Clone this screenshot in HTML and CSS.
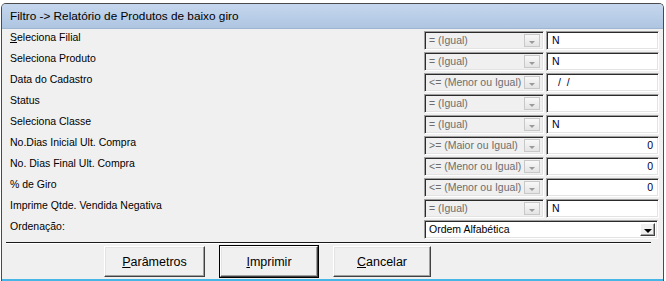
FILE: index.html
```html
<!doctype html>
<html>
  <head>
    <meta charset="utf-8">
    <title>Filtro -&gt; Relatório de Produtos de baixo giro</title>
    <link rel="stylesheet" href="styles.css">
  </head>
  <body>
    <div class="window">
      <div class="titlebar">Filtro -&gt; Relatório de Produtos de baixo giro</div>
      <div class="content">
        <div class="form">
          <div class="row">
            <span class="label"><u>S</u>eleciona Filial</span>
            <div class="combo disabled"><span>= (Igual)</span><i class="arrow"></i></div>
            <div class="field">N</div>
          </div>
          <div class="row">
            <span class="label">Seleciona Produto</span>
            <div class="combo disabled"><span>= (Igual)</span><i class="arrow"></i></div>
            <div class="field">N</div>
          </div>
          <div class="row">
            <span class="label">Data do Cadastro</span>
            <div class="combo disabled"><span>&lt;= (Menor ou Igual)</span><i class="arrow"></i></div>
            <div class="field date">/ /</div>
          </div>
          <div class="row">
            <span class="label">Status</span>
            <div class="combo disabled"><span>= (Igual)</span><i class="arrow"></i></div>
            <div class="field"></div>
          </div>
          <div class="row">
            <span class="label">Seleciona Classe</span>
            <div class="combo disabled"><span>= (Igual)</span><i class="arrow"></i></div>
            <div class="field">N</div>
          </div>
          <div class="row">
            <span class="label">No.Dias Inicial Ult. Compra</span>
            <div class="combo disabled"><span>&gt;= (Maior ou Igual)</span><i class="arrow"></i></div>
            <div class="field num">0</div>
          </div>
          <div class="row">
            <span class="label">No. Dias Final Ult. Compra</span>
            <div class="combo disabled"><span>&lt;= (Menor ou Igual)</span><i class="arrow"></i></div>
            <div class="field num">0</div>
          </div>
          <div class="row">
            <span class="label">% de Giro</span>
            <div class="combo disabled"><span>&lt;= (Menor ou Igual)</span><i class="arrow"></i></div>
            <div class="field num">0</div>
          </div>
          <div class="row">
            <span class="label">Imprime Qtde. Vendida Negativa</span>
            <div class="combo disabled"><span>= (Igual)</span><i class="arrow"></i></div>
            <div class="field">N</div>
          </div>
          <div class="row">
            <span class="label">Ordenação:</span>
            <div class="combo wide"><span>Ordem Alfabética</span><i class="arrow"></i></div>
          </div>
        </div>

        <div class="separator"></div>

        <div class="buttons">
          <button class="btn btn-params"><u>P</u>arâmetros</button>
          <button class="btn btn-default"><u>I</u>mprimir</button>
          <button class="btn"><u>C</u>ancelar</button>
        </div>
      </div>
    </div>
  </body>
</html>
```

FILE: styles.css
```css
body {
  margin: 0;
  background: #fff;
  font-family: "Liberation Sans", Arial, sans-serif;
  font-size: 10.5px;
  color: #000;
}

.window {
  margin: 3px 2px 0 1px;
  height: 278px;
  border: 1px solid #4a4a4a;
  border-bottom: 0;
  border-radius: 5px 5px 0 0;
  background: #f0f0f0;
  box-sizing: border-box;
  display: flex;
  flex-direction: column;
  overflow: hidden;
}

.titlebar {
  height: 24px;
  padding-left: 8px;
  line-height: 24px;
  font-size: 11.8px;
  background: linear-gradient(#c5d7ee, #aec5e1);
  border-bottom: 1px solid #9fb6d2;
}

.content {
  flex: 1;
  padding: 2px 4px 0 8px;
  border-bottom: 2px solid #47b5e5;
}

.row {
  display: grid;
  grid-template-columns: 1fr 120px 113px;
  column-gap: 2px;
  height: 19px;
  margin-bottom: 2px;
}

.label {
  line-height: 13px;
}

.combo,
.field {
  border: 1px solid;
  border-color: #a0a0a0 #fff #fff #a0a0a0;
  box-shadow: inset 1px 1px 0 #2b2b2b, inset -1px -1px 0 #e3e3e3;
  box-sizing: border-box;
  line-height: 17px;
  white-space: nowrap;
  overflow: hidden;
}

.combo {
  display: flex;
  padding-left: 4px;
  background: #fff;
}

.combo span {
  flex: 1;
}

.combo.disabled {
  background: #f0f0f0;
  color: #6d6d6d;
}

.combo.wide {
  grid-column: 2 / 4;
  margin-right: 1px;
  color: #000;
}

.combo .arrow {
  width: 15px;
  margin: 2px 2px 2px 0;
  border: 1px solid;
  border-color: #fff #404040 #404040 #fff;
  box-shadow: inset -1px -1px 0 #a0a0a0;
  box-sizing: border-box;
  background: #f0f0f0;
  position: relative;
}

.combo .arrow::after {
  content: "";
  position: absolute;
  left: 3px;
  top: 5px;
  border-left: 4px solid transparent;
  border-right: 4px solid transparent;
  border-top: 4px solid #000;
}

.combo.disabled .arrow {
  width: 16px;
  margin: 2px 3px 2px 0;
  border: 1px solid #c8c8c8;
  box-shadow: none;
  background: linear-gradient(#f8f8f8, #e4e4e4);
}

.combo.disabled .arrow::after {
  left: 4px;
  top: 6px;
  border-left-width: 3px;
  border-right-width: 3px;
  border-top: 3px solid #9a9a9a;
}

.field {
  padding: 0 5px 0 5px;
  background: #fff;
  color: #000033;
}

.field.date {
  padding-left: 11px;
  word-spacing: 3px;
}

.field.num {
  text-align: right;
}

.separator {
  margin: 3px 8px 0 -4px;
  height: 1px;
  background: #1a1a1a;
  border-bottom: 1px solid #fff;
}

.buttons {
  display: flex;
  gap: 15px;
  padding: 2px 0 0 94px;
}

.btn {
  width: 98px;
  height: 31px;
  padding: 0;
  font-family: "Liberation Sans", Arial, sans-serif;
  font-size: 12.5px;
  color: #000;
  background: #f0f0f0;
  border: 1px solid;
  border-color: #fff #404040 #404040 #fff;
  box-shadow: inset -1px -1px 0 #a0a0a0, inset 1px 1px 0 #e3e3e3;
}

.btn-params {
  width: 101px;
}

.btn-default {
  outline: 1px solid #000;
}
```
